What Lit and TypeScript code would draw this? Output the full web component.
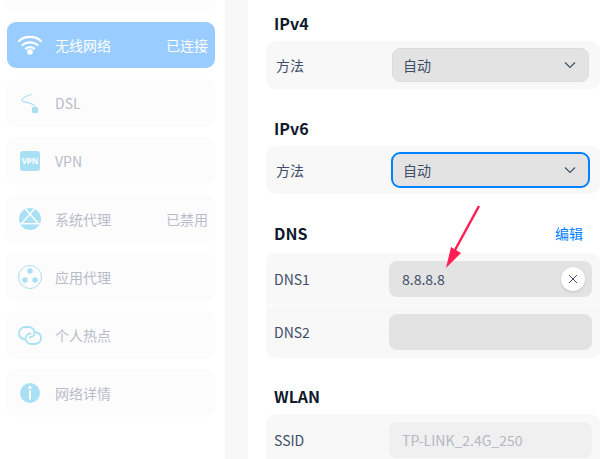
import { LitElement, html, css, svg } from 'lit';
import { customElement } from 'lit/decorators.js';

const ICON = '#a9e0f4';

const icons: Record<string, unknown> = {
  wifi: svg`<g fill="none" stroke="#fff" stroke-width="2.300" stroke-linecap="round">
      <path d="M3 10C8.500 4.500 19.500 4.500 25 10"/><path d="M6.500 14C10.500 10.500 17.500 10.500 21.500 14"/><path d="M10 17.500C12.500 15.700 15.500 15.700 18 17.500"/></g>
      <circle cx="14" cy="21" r="2.800" fill="#fff"/>`,
  dsl: svg`<path d="M15.700 5.300C11 7 6 9 5.700 11C6 13.500 14 13.500 17 15.500C18.300 16.300 19 17 19 18" fill="none" stroke="${ICON}" stroke-width="1.200"/>
      <rect x="16" y="18" width="6" height="6" rx="1.200" fill="${ICON}"/>`,
  proxy: svg`<circle cx="14" cy="14" r="11" fill="${ICON}"/>
      <g stroke="#fcfcfd" stroke-width="1.500" fill="none"><path d="M8.500 2.800L22.500 18.700"/><path d="M19.500 2.800L5.500 18.700"/><path d="M2.500 18.700H25.500"/></g>`,
  app: svg`<circle cx="14" cy="14" r="11.500" fill="none" stroke="${ICON}" stroke-width="1"/>
      <circle cx="14" cy="8" r="2.700" fill="${ICON}"/><circle cx="9" cy="17" r="2.700" fill="${ICON}"/><circle cx="19" cy="17" r="2.700" fill="${ICON}"/>`,
  hotspot: svg`<g fill="none" stroke="${ICON}" stroke-width="1.800">
      <path d="M9.500 18.500C5 18 3 15.500 3 12C3 8.500 6 6 9.500 6H12.500C16 6 18.500 8.500 18.500 11.500C18.500 14.500 16 16.500 13 16.500"/>
      <path d="M18.500 11C23 11.500 25 14 25 17C25 20.500 22.500 23 18.500 23H15.500C12 23 9.500 20.500 9.500 17.500C9.500 14.500 12 12.500 15 12.500"/></g>`,
  info: svg`<circle cx="14" cy="14" r="10" fill="${ICON}"/><circle cx="14" cy="8.500" r="1.600" fill="#fff"/><rect x="13" y="11.500" width="2" height="9" fill="#fff"/>`,
};

const navItems = [
  { icon: 'dsl', label: 'DSL' },
  { icon: 'vpn', label: 'VPN' },
  { icon: 'proxy', label: '系统代理', status: '已禁用' },
  { icon: 'app', label: '应用代理' },
  { icon: 'hotspot', label: '个人热点' },
  { icon: 'info', label: '网络详情' },
];

@customElement('app-root')
export class AppRoot extends LitElement {
  static styles = css`
    :host {
      display: flex;
      width: 615px;
      height: 459px;
      overflow: hidden;
      position: relative;
      background: #fff;
      font-family: 'Noto Sans CJK SC', 'Noto Sans', sans-serif;
      font-size: 14px;
      color: #414d68;
    }
    .sidebar {
      width: 225px;
      flex: none;
      box-sizing: border-box;
      padding: 0 9px 0 6px;
      display: flex;
      flex-direction: column;
      gap: 10px;
    }
    .cut {
      height: 11px;
      background: #fcfcfd;
      border-radius: 0 0 10px 10px;
    }
    .nav {
      height: 48px;
      display: flex;
      align-items: center;
      padding: 0 8px 0 10px;
      background: #fcfcfd;
      border-radius: 10px;
      color: #b8bcc8;
    }
    .nav.active {
      height: 46px;
      margin: 1px 1px;
      padding: 0 7px 0 9px;
      background: #99ccff;
      border-radius: 9px;
      color: #fff;
    }
    .nav svg, .vpn {
      width: 28px;
      height: 28px;
      flex: none;
    }
    .vpn {
      display: flex;
      align-items: center;
      justify-content: center;
    }
    .vpn span {
      width: 20px;
      height: 20px;
      border-radius: 3px;
      background: #a9e0f4;
      color: #fff;
      font: bold 8px/20px 'Noto Sans', sans-serif;
      text-align: center;
    }
    .label {
      margin-left: 11px;
      flex: 1;
    }
    .main {
      flex: 1;
      border-left: 23px solid #f8f8f8;
      padding: 0 15px 0 18px;
      background: #fff;
    }
    h2 {
      display: flex;
      justify-content: space-between;
      align-items: center;
      margin: 0;
      font-size: 16px;
      font-weight: 700;
      line-height: 22px;
      color: #0f1a2c;
      padding: 0 17px 2px 8px;
    }
    h2 a {
      font-size: 14px;
      font-weight: 400;
      color: #0081ff;
    }
    .section {
      display: flex;
      flex-direction: column;
      gap: 5px;
      margin-bottom: 28px;
    }
    .section.ipv4 { padding-top: 12px; }
    .section.dns { gap: 7px; margin-bottom: 27px; }
    .card {
      background: #f8f8f8;
      border-radius: 9px;
      overflow: hidden;
    }
    .row {
      height: 48px;
      display: flex;
      align-items: center;
      padding: 0 8px;
      box-sizing: border-box;
    }
    .row.method { padding-left: 10px; }
    .row + .row { border-top: 1px solid #fff; }
    .row.tall { height: 53px; }
    .row.tall:first-child { height: 52px; }
    .name { flex: 1; }
    .select {
      width: 197px;
      height: 34px;
      box-sizing: border-box;
      margin-right: 3px;
      display: flex;
      align-items: center;
      justify-content: space-between;
      padding: 0 11px 0 10px;
      background: #e3e3e3;
      border: 1px solid #dcdcdc;
      border-radius: 8px;
    }
    .select.focus {
      width: 199px;
      height: 36px;
      margin-right: 2px;
      border: 2px solid #0081ff;
      border-radius: 9px;
    }
    .select svg { width: 14px; height: 14px; }
    .input {
      width: 203px;
      height: 36px;
      box-sizing: border-box;
      display: flex;
      align-items: center;
      justify-content: space-between;
      padding: 0 7px 0 13px;
      background: #e3e3e3;
      border-radius: 8px;
    }
    .input.off {
      background: #f0f0f0;
      color: #b4b8c2;
    }
    .clear {
      width: 24px;
      height: 24px;
      border-radius: 50%;
      background: #fff;
      box-shadow: 0 1px 3px rgba(0, 0, 0, 0.15);
      display: flex;
      align-items: center;
      justify-content: center;
    }
    .clear svg { width: 10px; height: 10px; }
    .arrow {
      position: absolute;
      left: 440px;
      top: 200px;
      width: 50px;
      height: 75px;
      pointer-events: none;
    }
  `;

  private chevron() {
    return html`<svg viewBox="0 0 14 14"><path d="M2 4.500L7 9.500L12 4.500" fill="none" stroke="#414d68" stroke-width="1.200"/></svg>`;
  }

  render() {
    return html`
      <div class="sidebar">
        <div class="cut"></div>
        <div class="nav active">
          <svg viewBox="0 0 28 28">${icons.wifi}</svg>
          <span class="label">无线网络</span><span>已连接</span>
        </div>
        ${navItems.map(
          (n) => html`<div class="nav">
            ${n.icon === 'vpn'
              ? html`<div class="vpn"><span>VPN</span></div>`
              : html`<svg viewBox="0 0 28 28">${icons[n.icon]}</svg>`}
            <span class="label">${n.label}</span>
            ${n.status ? html`<span>${n.status}</span>` : ''}
          </div>`,
        )}
      </div>
      <div class="main">
        <div class="section ipv4">
          <h2>IPv4</h2>
          <div class="card">
            <div class="row method"><span class="name">方法</span><div class="select"><span>自动</span>${this.chevron()}</div></div>
          </div>
        </div>
        <div class="section">
          <h2>IPv6</h2>
          <div class="card">
            <div class="row method"><span class="name">方法</span><div class="select focus"><span>自动</span>${this.chevron()}</div></div>
          </div>
        </div>
        <div class="section dns">
          <h2>DNS<a>编辑</a></h2>
          <div class="card">
            <div class="row tall">
              <span class="name">DNS1</span>
              <div class="input"><span>8.8.8.8</span>
                <div class="clear"><svg viewBox="0 0 10 10"><path d="M1 1L9 9M9 1L1 9" stroke="#414d68" stroke-width="1"/></svg></div>
              </div>
            </div>
            <div class="row tall">
              <span class="name">DNS2</span>
              <div class="input"></div>
            </div>
          </div>
        </div>
        <div class="section">
          <h2>WLAN</h2>
          <div class="card">
            <div class="row tall"><span class="name">SSID</span><div class="input off"><span>TP-LINK_2.4G_250</span></div></div>
          </div>
        </div>
      </div>
      <svg class="arrow" viewBox="0 0 50 75">
        <path d="M39 6L15 50" stroke="#ff1f55" stroke-width="2.500"/>
        <path d="M6 68L11 47L21 53Z" fill="#ff1f55"/>
      </svg>
    `;
  }
}
